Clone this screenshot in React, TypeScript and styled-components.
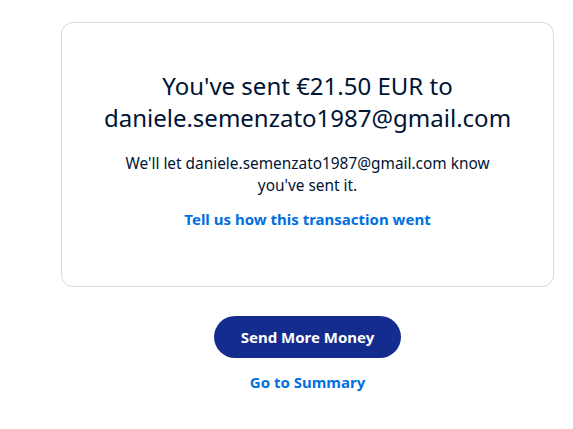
import React from 'react';
import styled, { createGlobalStyle } from 'styled-components';

const GlobalStyle = createGlobalStyle`
  body {
    margin: 0;
    background: #ffffff;
    font-family: "Noto Sans", "Open Sans", sans-serif;
    color: #001435;
  }
`;

const App: React.FC = () => {
  return (
    <>
      <GlobalStyle />
      <Page>
        <Card>
          <Heading>
            You've sent €21.50 EUR to
            <br />
            daniele.semenzato1987@gmail.com
          </Heading>
          <Message>
            We'll let daniele.semenzato1987@gmail.com know
            <br />
            you've sent it.
          </Message>
          <TextLink href="#">Tell us how this transaction went</TextLink>
        </Card>
        <Actions>
          <PrimaryButton type="button">Send More Money</PrimaryButton>
          <TextLink href="#">Go to Summary</TextLink>
        </Actions>
      </Page>
    </>
  );
};

export default App;

const Page = styled.main`
  width: 493px;
  padding: 22px 0 0 61px;
  display: flex;
  flex-direction: column;
  align-items: stretch;
`;

const Card = styled.section`
  box-sizing: border-box;
  height: 265px;
  border: 1px solid #dcd9cf;
  border-radius: 12px;
  padding: 47px 20px 0;
  display: flex;
  flex-direction: column;
  align-items: center;
  text-align: center;
`;

const Heading = styled.h1`
  margin: 0;
  font-size: 24px;
  line-height: 32px;
  font-weight: 400;
  color: #001435;
`;

const Message = styled.p`
  margin: 19px 0 11px;
  font-size: 15.4px;
  line-height: 22px;
  color: #001435;
`;

const TextLink = styled.a`
  font-size: 15px;
  line-height: 22px;
  font-weight: 700;
  color: #0070e0;
  text-decoration: none;
`;

const Actions = styled.div`
  margin-top: 29px;
  display: flex;
  flex-direction: column;
  align-items: center;
  gap: 13px;
`;

const PrimaryButton = styled.button`
  height: 42px;
  width: 187px;
  border: none;
  border-radius: 21px;
  background: #142c8e;
  color: #ffffff;
  font-family: inherit;
  font-size: 15px;
  font-weight: 700;
  cursor: pointer;
`;
